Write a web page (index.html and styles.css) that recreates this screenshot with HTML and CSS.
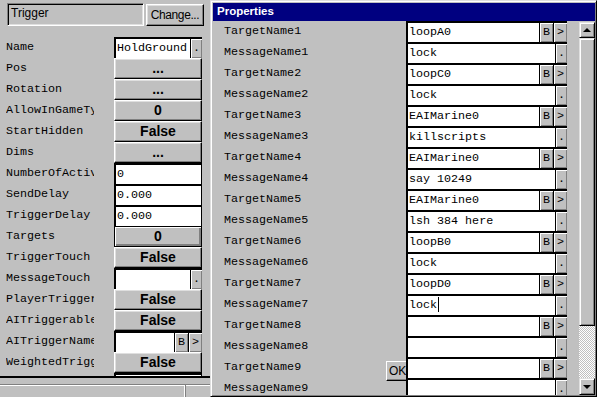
FILE: index.html
```html
<!DOCTYPE html>
<html lang="en">
<head>
  <meta charset="UTF-8">
  <meta name="viewport" content="width=device-width, initial-scale=1.0">
  <title>Properties</title>
  <link rel="stylesheet" href="styles.css">
</head>
<body>
  <div class="screen">
    <div class="inspector">
      <div class="head">
        <div class="objname">Trigger</div>
        <div class="btn change">Change...</div>
      </div>
      <div class="rows">
        <div class="row"><span class="key">Name</span><div class="val field"><span class="txt">HoldGround</span><span class="mini dot">.</span></div></div>
        <div class="row"><span class="key">Pos</span><div class="val btn">...</div></div>
        <div class="row"><span class="key">Rotation</span><div class="val btn">...</div></div>
        <div class="row"><span class="key">AllowInGameTypes</span><div class="val btn">0</div></div>
        <div class="row"><span class="key">StartHidden</span><div class="val btn">False</div></div>
        <div class="row"><span class="key">Dims</span><div class="val btn">...</div></div>
        <div class="row"><span class="key">NumberOfActivations</span><div class="val field solo"><span class="txt">0</span></div></div>
        <div class="row"><span class="key">SendDelay</span><div class="val field solo"><span class="txt">0.000</span></div></div>
        <div class="row"><span class="key">TriggerDelay</span><div class="val field solo"><span class="txt">0.000</span></div></div>
        <div class="row"><span class="key">Targets</span><div class="val btn default">0</div></div>
        <div class="row"><span class="key">TriggerTouch</span><div class="val btn">False</div></div>
        <div class="row"><span class="key">MessageTouch</span><div class="val field"><span class="txt"></span><span class="mini dot">.</span></div></div>
        <div class="row"><span class="key">PlayerTriggerable</span><div class="val btn">False</div></div>
        <div class="row"><span class="key">AITriggerable</span><div class="val btn">False</div></div>
        <div class="row"><span class="key">AITriggerName</span><div class="val field"><span class="txt"></span><span class="mini">B</span><span class="mini">&gt;</span></div></div>
        <div class="row"><span class="key">WeightedTriggering</span><div class="val btn">False</div></div>
        <div class="row"><span class="key">TriggerWeight</span><div class="val field solo"><span class="txt"></span></div></div>
      </div>
      <div class="divider"></div>
      <div class="status"><span class="cell first"></span><span class="cell"></span></div>
    </div>

    <div class="props">
      <div class="title">Properties</div>
      <div class="ok">OK</div>
      <div class="pbody">
        <div class="plist">
          <div class="prow"><span class="pkey">TargetName1</span><div class="pval"><span class="txt">loopA0</span><span class="mini">B</span><span class="mini">&gt;</span></div></div>
          <div class="prow"><span class="pkey">MessageName1</span><div class="pval"><span class="txt">lock</span><span class="mini dot">.</span></div></div>
          <div class="prow"><span class="pkey">TargetName2</span><div class="pval"><span class="txt">loopC0</span><span class="mini">B</span><span class="mini">&gt;</span></div></div>
          <div class="prow"><span class="pkey">MessageName2</span><div class="pval"><span class="txt">lock</span><span class="mini dot">.</span></div></div>
          <div class="prow"><span class="pkey">TargetName3</span><div class="pval"><span class="txt">EAIMarine0</span><span class="mini">B</span><span class="mini">&gt;</span></div></div>
          <div class="prow"><span class="pkey">MessageName3</span><div class="pval"><span class="txt">killscripts</span><span class="mini dot">.</span></div></div>
          <div class="prow"><span class="pkey">TargetName4</span><div class="pval"><span class="txt">EAIMarine0</span><span class="mini">B</span><span class="mini">&gt;</span></div></div>
          <div class="prow"><span class="pkey">MessageName4</span><div class="pval"><span class="txt">say 10249</span><span class="mini dot">.</span></div></div>
          <div class="prow"><span class="pkey">TargetName5</span><div class="pval"><span class="txt">EAIMarine0</span><span class="mini">B</span><span class="mini">&gt;</span></div></div>
          <div class="prow"><span class="pkey">MessageName5</span><div class="pval"><span class="txt">lsh 384 here</span><span class="mini dot">.</span></div></div>
          <div class="prow"><span class="pkey">TargetName6</span><div class="pval"><span class="txt">loopB0</span><span class="mini">B</span><span class="mini">&gt;</span></div></div>
          <div class="prow"><span class="pkey">MessageName6</span><div class="pval"><span class="txt">lock</span><span class="mini dot">.</span></div></div>
          <div class="prow"><span class="pkey">TargetName7</span><div class="pval"><span class="txt">loopD0</span><span class="mini">B</span><span class="mini">&gt;</span></div></div>
          <div class="prow"><span class="pkey">MessageName7</span><div class="pval"><span class="txt">lock<span class="caret"></span></span><span class="mini dot">.</span></div></div>
          <div class="prow"><span class="pkey">TargetName8</span><div class="pval"><span class="txt"></span><span class="mini">B</span><span class="mini">&gt;</span></div></div>
          <div class="prow"><span class="pkey">MessageName8</span><div class="pval"><span class="txt"></span><span class="mini dot">.</span></div></div>
          <div class="prow"><span class="pkey">TargetName9</span><div class="pval"><span class="txt"></span><span class="mini">B</span><span class="mini">&gt;</span></div></div>
          <div class="prow"><span class="pkey">MessageName9</span><div class="pval"><span class="txt"></span><span class="mini dot">.</span></div></div>
        </div>
        <div class="scroll">
          <div class="sb-btn up"></div>
          <div class="thumb"></div>
          <div class="track"></div>
          <div class="sb-btn down"></div>
        </div>
      </div>
    </div>
  </div>
</body>
</html>
```

FILE: styles.css
```css
* {
  box-sizing: border-box;
}

body {
  margin: 0;
  width: 597px;
  height: 397px;
  overflow: hidden;
  background: #c0c0c0;
  color: #000;
  font-family: "Liberation Mono", "DejaVu Sans Mono", monospace;
  font-size: 11.7px;
}

.screen {
  display: flex;
  height: 397px;
}

/* left object inspector */
.inspector {
  width: 210px;
  height: 397px;
  display: flex;
  flex-direction: column;
}

.head {
  height: 37px;
  display: flex;
  gap: 2px;
  padding: 3px 0 0 7px;
  font-family: "Liberation Sans", Arial, sans-serif;
  font-size: 12px;
}

.objname {
  width: 137px;
  height: 23px;
  padding: 2px 3px;
  line-height: 15px;
  border: 1px solid;
  border-color: #808080 #fff #fff #808080;
  box-shadow: inset 1px 1px #000, inset -1px -1px #dfdfdf;
}

.btn {
  display: flex;
  align-items: center;
  justify-content: center;
  border: 1px solid;
  border-color: #fff #000 #000 #fff;
  box-shadow: inset -1px -1px #808080, inset 1px 1px #dfdfdf;
}

.change {
  width: 58px;
  height: 22px;
  margin-top: 1px;
  letter-spacing: -0.4px;
}

.rows {
  height: 339px;
  overflow: hidden;
}

.row {
  display: flex;
  height: 21px;
}

.key {
  width: 88px;
  margin-left: 6px;
  margin-right: 20px;
  overflow: hidden;
  white-space: nowrap;
  line-height: 20px;
}

.val {
  width: 88px;
  display: flex;
}

.val.btn {
  font-family: "Liberation Sans", Arial, sans-serif;
  font-weight: bold;
  font-size: 14px;
  padding-bottom: 1px;
}

.val.default {
  border-color: #000;
  box-shadow: inset 1px 1px #fff, inset -2px -2px #808080;
}

.field {
  border-top: 2px solid #000;
  border-left: 2px solid #000;
  background: #fff;
}

.field.solo {
  border-right: 1px solid #000;
}

.txt {
  flex: 1;
  min-width: 0;
  padding-left: 1px;
  background: #fff;
  line-height: 19px;
  white-space: nowrap;
  overflow: hidden;
}

.mini {
  width: 14px;
  flex: none;
  background: #c0c0c0;
  border-left: 1px solid #000;
  box-shadow: inset 1px 1px #fff, inset -1px -1px #808080;
  text-align: center;
  line-height: 19px;
}

.mini.dot {
  width: 12px;
}

.divider {
  height: 8px;
  border-top: 2px solid #000;
}

.status {
  flex: 1;
  display: flex;
  border-top: 1px solid #808080;
  box-shadow: inset 0 1px #fff;
}

.status .cell {
  height: 100%;
}

.status .first {
  width: 185px;
  border-right: 1px solid #fff;
  box-shadow: 1px 0 #808080;
}

/* properties window */
.props {
  position: relative;
  width: 387px;
  height: 397px;
  padding: 2px 0 1px 2px;
  border: 1px solid;
  border-color: #dfdfdf #000 #000 #dfdfdf;
  box-shadow: inset 1px 1px #fff, inset -1px -1px #808080;
}

.title {
  height: 18px;
  margin-right: 1px;
  padding-left: 4px;
  background: #000080;
  color: #fff;
  font-family: "Liberation Sans", Arial, sans-serif;
  font-weight: bold;
  font-size: 11.5px;
  line-height: 17px;
}

.pbody {
  display: flex;
  height: 374px;
}

.plist {
  width: 354px;
  padding-left: 11px;
  overflow: hidden;
}

.prow {
  display: flex;
  height: 21px;
}

.pkey {
  width: 182px;
  flex: none;
  line-height: 20px;
  white-space: nowrap;
}

.pval {
  position: relative;
  z-index: 1;
  width: 161px;
  display: flex;
  border-top: 2px solid #000;
  border-left: 2px solid #000;
  background: #fff;
}

.pval .txt {
  padding-left: 1px;
}

.caret {
  display: inline-block;
  width: 1px;
  height: 15px;
  margin-left: 1px;
  background: #000;
  vertical-align: -4px;
}

.ok {
  position: absolute;
  left: 175px;
  top: 360px;
  z-index: 0;
  width: 24px;
  height: 20px;
  padding-left: 2px;
  border: 1px solid;
  border-color: #fff #000 #000 #fff;
  box-shadow: inset -1px -1px #808080;
  font-family: "Liberation Sans", Arial, sans-serif;
  font-size: 12px;
  line-height: 18px;
}

/* scrollbar */
.scroll {
  width: 16px;
  margin-left: 12px;
  padding-top: 1px;
  display: flex;
  flex-direction: column;
}

.sb-btn,
.thumb {
  border: 1px solid;
  border-color: #dfdfdf #000 #000 #dfdfdf;
  box-shadow: inset 1px 1px #fff, inset -1px -1px #808080;
  background: #c0c0c0;
}

.sb-btn {
  display: flex;
  align-items: center;
  justify-content: center;
}

.up {
  height: 16px;
}

.down {
  height: 17px;
}

.up::after,
.down::after {
  content: "";
  border-left: 4px solid transparent;
  border-right: 4px solid transparent;
}

.up::after {
  border-bottom: 4px solid #000;
}

.down::after {
  border-top: 4px solid #000;
}

.thumb {
  height: 288px;
}

.track {
  height: 52px;
  background: repeating-conic-gradient(#c0c0c0 0 25%, #fff 0 50%) 0 0 / 2px 2px;
}
```
